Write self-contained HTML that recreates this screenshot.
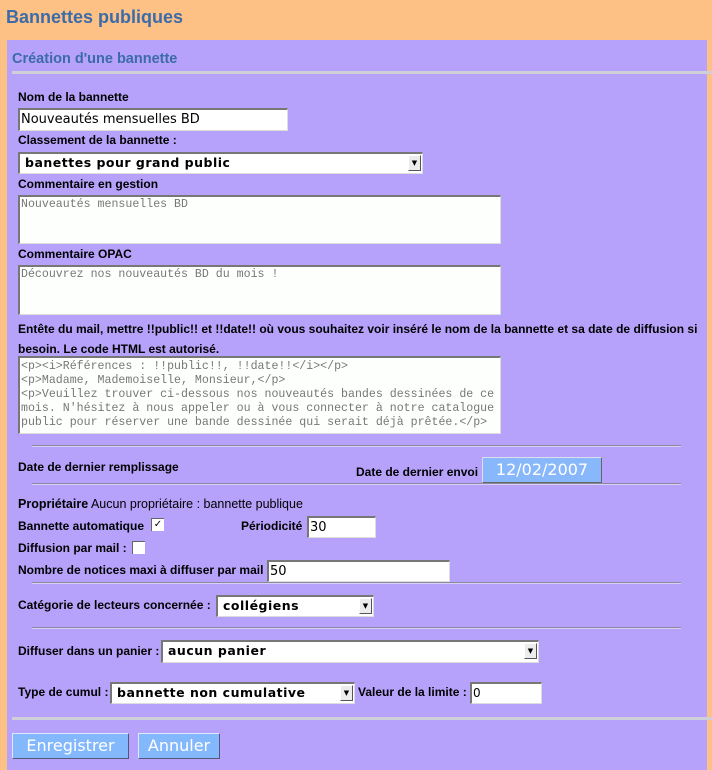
<!DOCTYPE html>
<html><head><meta charset="utf-8"><style>
*{margin:0;padding:0;box-sizing:border-box}
body{width:712px;height:762px;background:#fec185;position:relative;overflow:hidden;font-family:"Liberation Sans",sans-serif}
.a{position:absolute;white-space:nowrap}
.l{font-weight:bold;font-size:12px;color:#000}
.panel{position:absolute;left:7px;top:40px;width:700px;height:730px;background:#b6a2fa}
.inp{position:absolute;background:#fff;border-top:2px solid #777;border-left:2px solid #777;border-right:1px solid #ddd;border-bottom:1px solid #ddd;font-family:"DejaVu Sans",sans-serif;font-size:13px;padding-left:1px;line-height:19px}
.ta{position:absolute;background:#fdfffd;border-top:2px solid #777;border-left:2px solid #777;border-right:1px solid #ddd;border-bottom:1px solid #ddd;font-family:"Liberation Mono",monospace;font-size:11.6px;color:#777;line-height:14px;padding:1px 0 0 1px;white-space:pre}
.sel{position:absolute;background:#fff;border-top:2px solid #777;border-left:2px solid #777;border-right:1px solid #ddd;border-bottom:1px solid #ddd;font-family:"DejaVu Sans",sans-serif;font-weight:bold;font-size:12.5px;letter-spacing:.5px;padding-left:5px;line-height:18px}
.sel .ar{position:absolute;right:1px;top:1px;width:13px;height:16px;background:#ececec;border-right:1px solid #555;border-bottom:1px solid #555;border-top:1px solid #fff;border-left:1px solid #fff;font-size:7px;line-height:14px;text-align:center;letter-spacing:0}
.hr{position:absolute;height:2px;border-top:1px solid #8a8a9a;border-bottom:1px solid #d8d0f8}
.cb{position:absolute;width:13px;height:13px;background:#fff;border-top:1px solid #666;border-left:1px solid #666;font-size:10px;line-height:11px;text-align:center}
.btn{position:absolute;background:#84b8fc;color:#fff;font-family:"DejaVu Sans",sans-serif;font-size:16px;border:1px solid #e0e8ff;border-right-color:#557;border-bottom-color:#557;text-align:center;line-height:23px}
</style></head><body>
<div class="a" style="left:6px;top:7px;font-size:18px;font-weight:bold;color:#3b6ba8">Bannettes publiques</div>
<div class="panel"></div>
<div class="a" style="left:12px;top:51px;font-size:14.5px;font-weight:bold;color:#3b6ba8">Création d'une bannette</div>
<div class="a" style="left:12px;top:71px;width:700px;height:3px;background:#cfcfd8"></div>

<div class="a l" style="left:18px;top:90px">Nom de la bannette</div>
<div class="inp" style="left:18px;top:108px;width:270px;height:23px">Nouveautés mensuelles BD</div>
<div class="a l" style="left:18px;top:133px">Classement de la bannette :</div>
<div class="sel" style="left:18px;top:152px;width:405px;height:22px">banettes pour grand public<span class="ar">▼</span></div>
<div class="a l" style="left:18px;top:177px">Commentaire en gestion</div>
<div class="ta" style="left:18px;top:195px;width:483px;height:49px">Nouveautés mensuelles BD</div>
<div class="a l" style="left:18px;top:247px">Commentaire OPAC</div>
<div class="ta" style="left:18px;top:265px;width:483px;height:50px">Découvrez nos nouveautés BD du mois !</div>
<div class="a l" style="left:18px;top:319px;line-height:20px">Entête du mail, mettre !!public!! et !!date!! où vous souhaitez voir inséré le nom de la bannette et sa date de diffusion si<br>besoin. Le code HTML est autorisé.</div>
<div class="ta" style="left:18px;top:356px;width:483px;height:78px;padding-top:2px">&lt;p&gt;&lt;i&gt;Références : !!public!!, !!date!!&lt;/i&gt;&lt;/p&gt;
&lt;p&gt;Madame, Mademoiselle, Monsieur,&lt;/p&gt;
&lt;p&gt;Veuillez trouver ci-dessous nos nouveautés bandes dessinées de ce
mois. N'hésitez à nous appeler ou à vous connecter à notre catalogue
public pour réserver une bande dessinée qui serait déjà prêtée.&lt;/p&gt;</div>

<div class="hr" style="left:32px;top:445px;width:649px"></div>
<div class="a l" style="left:18px;top:460px">Date de dernier remplissage</div>
<div class="a l" style="left:356px;top:465px">Date de dernier envoi</div>
<div class="a" style="left:482px;top:457px;width:120px;height:26px;background:#88b8fb;border:1px solid #dde;border-right-color:#666;border-bottom-color:#666;color:#fff;font-family:'DejaVu Sans',sans-serif;font-size:16px;text-align:center;line-height:24px">12/02/2007</div>
<div class="hr" style="left:32px;top:483px;width:649px"></div>

<div class="a" style="left:18px;top:497px;font-size:12.5px"><b>Propriétaire</b> Aucun propriétaire : bannette publique</div>
<div class="a l" style="left:18px;top:519px">Bannette automatique</div>
<div class="cb" style="left:151px;top:518px">✓</div>
<div class="a l" style="left:241px;top:519px">Périodicité</div>
<div class="inp" style="left:307px;top:516px;width:69px;height:22px">30</div>
<div class="a l" style="left:18px;top:541px">Diffusion par mail :</div>
<div class="cb" style="left:132px;top:541px"></div>
<div class="a l" style="left:18px;top:563px">Nombre de notices maxi à diffuser par mail</div>
<div class="inp" style="left:267px;top:560px;width:183px;height:22px">50</div>
<div class="hr" style="left:32px;top:582px;width:649px"></div>

<div class="a l" style="left:18px;top:598px">Catégorie de lecteurs concernée :</div>
<div class="sel" style="left:216px;top:595px;width:158px;height:22px">collégiens<span class="ar">▼</span></div>
<div class="hr" style="left:32px;top:627px;width:649px"></div>
<div class="a l" style="left:18px;top:644px">Diffuser dans un panier :</div>
<div class="sel" style="left:161px;top:640px;width:378px;height:23px">aucun panier<span class="ar">▼</span></div>
<div class="a l" style="left:18px;top:685px">Type de cumul :</div>
<div class="sel" style="left:110px;top:682px;width:245px;height:22px">bannette non cumulative<span class="ar">▼</span></div>
<div class="a l" style="left:358px;top:685px">Valeur de la limite :</div>
<div class="inp" style="left:470px;top:682px;width:72px;height:22px;font-size:12px">0</div>
<div class="a" style="left:12px;top:717px;width:700px;height:3px;background:#cfcfd8"></div>
<div class="btn" style="left:12px;top:733px;width:117px;height:26px">Enregistrer</div>
<div class="btn" style="left:138px;top:733px;width:82px;height:26px">Annuler</div>
</body></html>
